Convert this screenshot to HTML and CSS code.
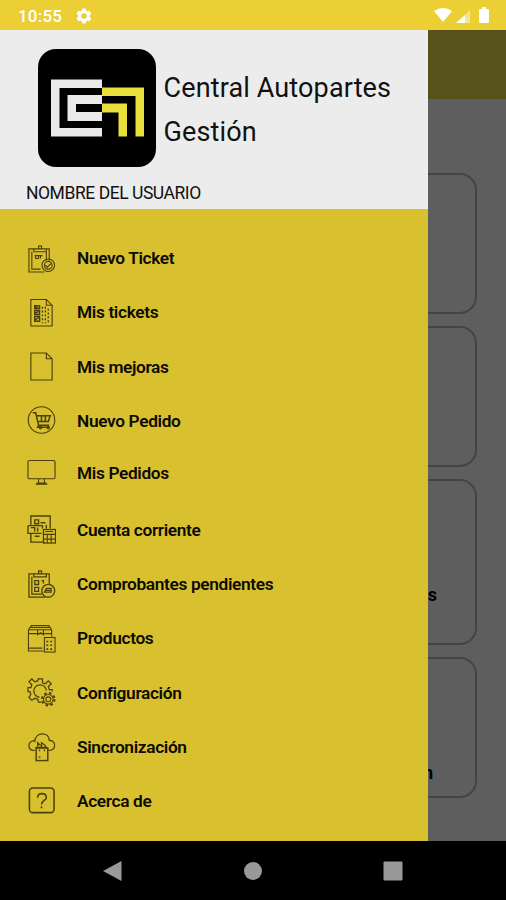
FILE: index.html
```
<!DOCTYPE html>
<html lang="es">
<head>
  <meta charset="UTF-8">
  <meta name="viewport" content="width=device-width, initial-scale=1.0">
  <title>Central Autopartes Gestión</title>
  <link rel="stylesheet" href="styles.css">
</head>
<body>
  <header class="statusbar">
    <span class="clock">10:55</span>
    <svg class="gear" width="18" height="18" viewBox="0 0 24 24"><path fill="#fff" fill-rule="evenodd" d="M19.4 13c.1-.3.1-.7.1-1s0-.7-.1-1l2.1-1.600c.2-.2.300-.4.1-.6l-2-3.500c-.1-.2-.4-.3-.6-.2l-2.500 1c-.5-.4-1.100-.7-1.700-1l-.4-2.600c0-.3-.2-.5-.5-.5h-4c-.3 0-.5.2-.5.5L9 5.100c-.6.3-1.200.6-1.700 1l-2.500-1c-.2-.1-.5 0-.6.200l-2 3.500c-.1.2-.1.4.1.6L4.500 11c-.1.300-.1.700-.1 1s0 .7.1 1l-2.200 1.600c-.2.2-.2.4-.1.6l2 3.500c.1.2.4.3.6.2l2.500-1c.5.4 1.100.7 1.700 1l.4 2.600c0 .3.200.5.5.5h4c.3 0 .5-.2.5-.5l.4-2.600c.6-.3 1.200-.6 1.700-1l2.500 1c.2.1.5 0 .6-.2l2-3.500c.1-.2.1-.4-.1-.6zM12 8.300a3.700 3.700 0 1 1 0 7.400a3.700 3.700 0 0 1 0-7.400z"/></svg>
    <svg class="signals" width="58" height="18" viewBox="0 0 58 18" fill="#fff">
      <path d="M1 4Q10 -2 19 4L10 15z"/>
      <path d="M23 16L32 8V16z"/>
      <path opacity=".45" d="M32 8L37 3V16H32z"/>
      <path d="M47 2h2V0h4v2h1q2 0 2 1v12q0 1-1 1h-7q-2 0-2-1V3q0-1 1-1z"/>
    </svg>
  </header>

  <div class="screen">
    <!-- Home page, dimmed while the drawer is open -->
    <main class="home">
      <div class="toolbar"></div>
      <div class="cards">
        <section class="card"></section>
        <section class="card"></section>
        <section class="card big"><span>s</span></section>
        <section class="card last"><span>n</span></section>
      </div>
    </main>

    <aside class="drawer">
      <div class="drawer-header">
        <div class="brand">
          <svg width="118" height="118" viewBox="0 0 118 118">
            <rect width="118" height="118" rx="18"/>
            <path fill="#e9e9e9" d="M13 30.500h51V39H21.500v40H64v8.500H13zM29.500 46H64v9H38v8h26v9H29.500z"/>
            <path fill="#e9e03c" d="M64 38.500h42v49h-8.500V47H64zM64 54.500h25v33h-8.500v-24H64z"/>
          </svg>
          <h1>Central Autopartes Gestión</h1>
        </div>
        <p class="user">NOMBRE DEL USUARIO</p>
      </div>

      <nav class="menu">
        <a class="item">
          <svg viewBox="0 0 30 30"><path d="M8 5H2v24h16M20 5h3v12M5 8v18h9M20 8v9M7 5h13v3H7zM12 5V2h3v3M8 12h8M9 12v3h3v-3M14 12v3"/><circle cx="22" cy="22" r="6.500"/><circle cx="22" cy="22" r="4"/><path d="M19 22l2 2 4-4"/></svg>
          <span>Nuevo Ticket</span>
        </a>
        <a class="item">
          <svg viewBox="0 0 30 30"><path d="M4 1.500h16l6 6V29H4zM20 1.500v6h6"/><path stroke-width="1.500" d="M8 8h5v3H8zM8 13h5v4H8zM8 19h5v5H8zM8 9l4 2M8 16l4-2M8 23l4-3"/><path stroke-width="1.400" stroke-dasharray="2 2" d="M16 9v17M19 9v17M22 11v15"/></svg>
          <span>Mis tickets</span>
        </a>
        <a class="item">
          <svg viewBox="0 0 30 30"><path d="M4 1h16l6 6v22H4zM20 1v6h6"/></svg>
          <span>Mis mejoras</span>
        </a>
        <a class="item short">
          <svg viewBox="0 0 30 30"><circle cx="15" cy="14.500" r="13.700"/><path stroke-width="1.600" d="M6 7h3l3 13h11M10 10h14l-2 6H12M12 20l-1 2h12M15 10v6M19 10v6"/><circle cx="14" cy="22.500" r="1.200"/><circle cx="22" cy="22.500" r="1.200"/></svg>
          <span>Nuevo Pedido</span>
        </a>
        <a class="item tall">
          <svg viewBox="0 0 30 30"><rect x="1" y="1.500" width="28" height="19" rx="1.500"/><path d="M12 20.500V25M18 20.500V25M9 26h12M10 25h10"/></svg>
          <span>Mis Pedidos</span>
        </a>
        <a class="item">
          <svg viewBox="0 0 30 30"><path stroke-width="1.400" d="M4 10V1h20v13M4 19v9h14M8 5h4v4H8zM14 8h5M1 11h15v3M1 11v8h14M4 13h4v4M11 13v4M20 10v4M8 22h5"/><rect x="17" y="15" width="12.500" height="14" stroke-width="1.300"/><path d="M17 20h12M21 20v9M25 20v9M17 25h12M19 17h8"/></svg>
          <span>Cuenta corriente</span>
        </a>
        <a class="item">
          <svg viewBox="0 0 30 30"><path stroke-width="1.300" d="M8 4H2v24h17M19 4h4v11M5 7v18h11M7 4h13v3H7zM12 4V1h3v3M8 11h4v4H8zM8 18h4v4H8zM15 11h2v3"/><circle cx="22" cy="21.500" r="6.700" stroke-width="1.400"/><path stroke-width="1.300" d="M18 23l2-4h5v4zM19 21h6"/></svg>
          <span>Comprobantes pendientes</span>
        </a>
        <a class="item">
          <svg viewBox="0 0 30 30"><path d="M1.500 6l3-4.500h18l3 4.500v7M1.500 6v22H17M1.500 6h24M1.500 10h24M4 3.500h19M11 6v5l3-2 3 2V6M2 25h14"/><rect x="18" y="14" width="11" height="15"/><path stroke-width="1.600" stroke-dasharray="2 2" d="M20 18h7M20 22h7M20 26h7"/></svg>
          <span>Productos</span>
        </a>
        <a class="item">
          <svg viewBox="0 0 30 30"><path stroke-width="1.300" d="M12 1h4v4l3 1 3-3 3 3-3 3 1 3h3v2M15 25h-3l-1-3-3-1-3 2-3-3 2-3-1-3H1v-4h3l1-3-3-3 3-3 3 3 3-1 1-3M13 20a6.500 6.500 0 1 1 7-7"/><circle cx="22" cy="22" r="2.500"/><circle cx="22" cy="22" r="5"/><circle cx="22" cy="22" r="6.500" stroke-width="2" stroke-dasharray="2.600 2.500"/></svg>
          <span>Configuración</span>
        </a>
        <a class="item">
          <svg viewBox="0 0 30 30"><path stroke-width="1.300" d="M8 18H6a5 5 0 0 1-1-9.500q2-1 3 0c1-10 15-10 15-1 5 0 6 4 5.500 6.500q-1 4-6.500 4"/><rect x="9.500" y="15.500" width="12" height="13" stroke-width="1.500"/><path stroke-width="1.300" d="M9 15h12M11 14v-4l3 3M15 15v-5l4 3v2M13 19v-2M18 19v-2M12 25h2"/></svg>
          <span>Sincronización</span>
        </a>
        <a class="item">
          <svg viewBox="0 0 30 30"><rect x="2.500" y="1" width="25.500" height="25.500" rx="3.500" stroke-width="1.600"/><path stroke-width="1.600" d="M11 11c0-5.500 9-5.500 9 0 0 3-5 3-5 7M15 20v2"/></svg>
          <span>Acerca de</span>
        </a>
      </nav>
    </aside>
  </div>

  <footer class="navbar">
    <svg width="20" height="22" viewBox="0 0 20 22"><path d="M0 11L18.500 1v20z"/></svg>
    <svg width="20" height="22" viewBox="0 0 20 22"><circle cx="10" cy="11" r="9"/></svg>
    <svg width="20" height="22" viewBox="0 0 20 22"><rect x=".5" y="1.500" width="19" height="19" rx="1"/></svg>
  </footer>
</body>
</html>
```

FILE: styles.css
```
* {
  box-sizing: border-box;
}
body {
  margin: 0;
  height: 900px;
  display: flex;
  flex-direction: column;
  overflow: hidden;
  font-family: Roboto, sans-serif;
  background-color: #000;
  color: #111;
}
.statusbar {
  height: 30px;
  display: flex;
  align-items: center;
  padding: 1px 15px 0 18px;
  background-color: #ebcf34;
  color: #fff;
}
.clock {
  font-size: 17px;
  font-weight: 500;
  letter-spacing: 0.2px;
}
.gear {
  margin-left: 13px;
}
.signals {
  margin-left: auto;
}
.screen {
  position: relative;
  height: 811px;
}
.home {
  height: 100%;
  background-color: #5e5e5e;
}
.toolbar {
  height: 69px;
  background-color: #57521c;
}
.cards {
  display: flex;
  flex-direction: column;
  gap: 12px;
  padding: 74px 29px 0;
}
.card {
  display: flex;
  align-items: flex-end;
  justify-content: flex-end;
  height: 141px;
  padding: 0 38px 38px 0;
  border: 2px solid #444;
  border-radius: 17px;
  font-size: 18px;
  font-weight: bold;
  color: #000;
}
.card.big {
  height: 166px;
}
.card.last {
  padding: 0 42px 13px 0;
}

/* Drawer */
.drawer {
  position: absolute;
  top: 0;
  left: 0;
  width: 428px;
  height: 100%;
  background-color: #d9c02f;
}
.drawer-header {
  height: 179px;
  padding: 19px 0 0 26px;
  background-color: #ececec;
}
.brand {
  display: flex;
  align-items: center;
  gap: 8px;
  padding-left: 11.500px;
}
.brand h1 {
  width: 240px;
  margin: 3px 0 0;
  font-size: 27px;
  font-weight: 400;
  line-height: 44px;
  letter-spacing: 0.130px;
}
.user {
  margin: 16px 0 0;
  font-size: 17.500px;
  line-height: 21px;
  letter-spacing: -0.450px;
}
.menu {
  padding: 34px 0 0 27px;
}
.item {
  display: flex;
  align-items: center;
  gap: 21px;
  height: 30px;
  margin-bottom: 24.300px;
  font-size: 17.300px;
  font-weight: 600;
  letter-spacing: -0.350px;
  color: #0d0b00;
}
.item svg {
  width: 29px;
  height: 29px;
  fill: none;
  stroke: #4a400d;
  stroke-width: 1.150;
}
.item.short {
  margin-bottom: 22.500px;
}
.item.tall {
  margin-bottom: 26.500px;
}

.navbar {
  flex: 1;
  display: flex;
  justify-content: center;
  align-items: center;
  gap: 120px;
  background-color: #000;
  fill: #999;
}
```
